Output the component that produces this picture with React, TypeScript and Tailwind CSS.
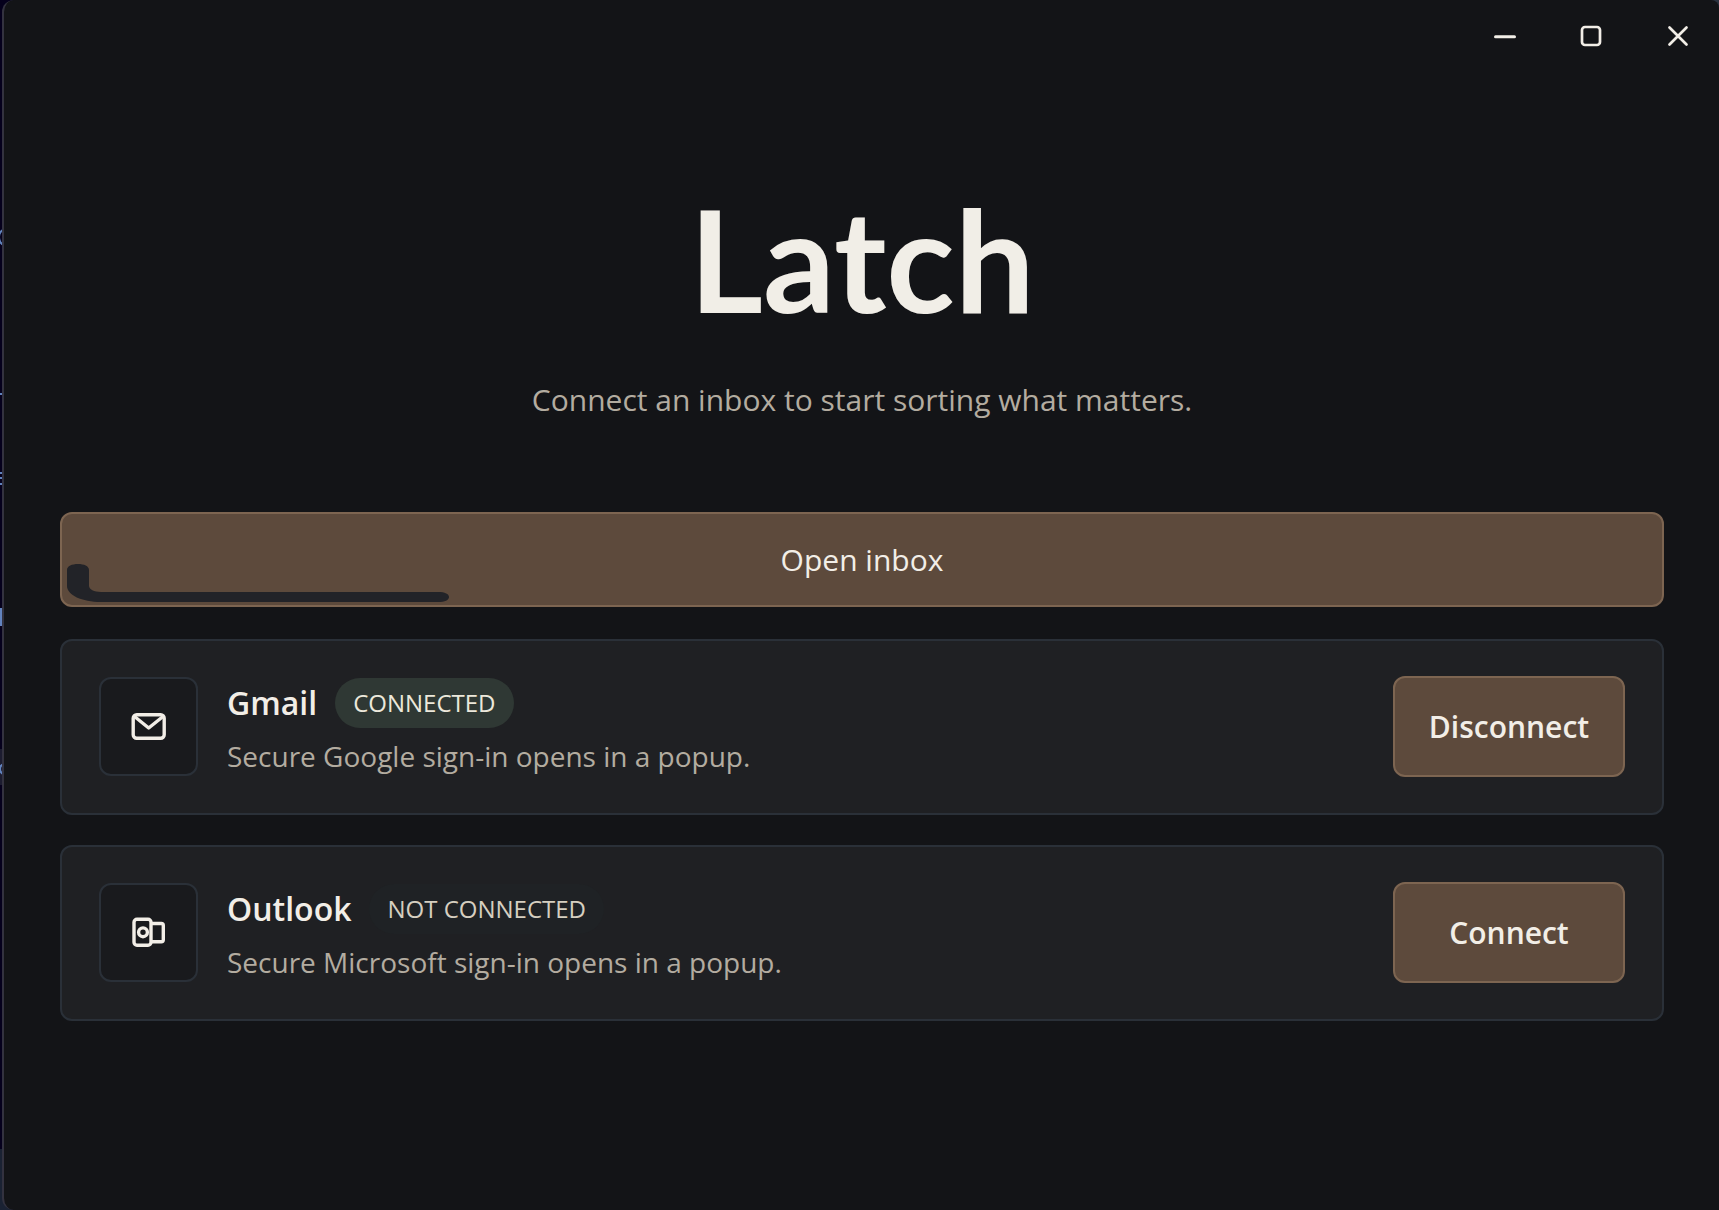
import React from "react";

interface Account {
  id: string;
  name: string;
  connected: boolean;
  note: string;
  icon: React.ReactNode;
}

function MailIcon() {
  return (
    <svg viewBox="0 0 39 39" className="size-[39px]" fill="none" stroke="currentColor" strokeWidth="3.4" strokeLinejoin="round" aria-hidden="true">
      <rect x="4.2" y="7.700" width="31" height="23.600" rx="3.500" />
      <path d="M5.500 9.500l14.200 11.500L34 9.500" />
    </svg>
  );
}

function OutlookIcon() {
  return (
    <svg viewBox="0 0 39 39" className="size-[39px]" fill="none" stroke="currentColor" strokeWidth="3.4" strokeLinejoin="round" aria-hidden="true">
      <rect x="5" y="6.300" width="17" height="26" rx="3" />
      <circle cx="14" cy="19.300" r="4.400" />
      <path d="M22 10.500h10.300a2 2 0 0 1 2 2v14.200a2 2 0 0 1-2 2H22" />
    </svg>
  );
}

const ACCOUNTS: Account[] = [
  { id: "gmail",   name: "Gmail",   connected: true,  note: "Secure Google sign-in opens in a popup.",    icon: <MailIcon /> },
  { id: "outlook", name: "Outlook", connected: false, note: "Secure Microsoft sign-in opens in a popup.", icon: <OutlookIcon /> },
];

// Sliver of the editor that stays visible to the left of the window
function DesktopEdge() {
  return (
    <svg width="14" height="1210" viewBox="0 0 14 1210" className="absolute left-0 top-0" fill="none" stroke="#6283be" strokeWidth="2" aria-hidden="true">
      <rect width="14" height="1210" fill="#05001c" stroke="none" />
      <rect y="749" width="4" height="36" fill="#1c1c30" stroke="none" />
      <rect y="1149" width="14" height="61" fill="#1a2233" stroke="none" />
      <path d="M4 229Q-1 232 -1 237Q-1 243 4 245" />
      <path d="M0 394h4" />
      <path d="M0 473h3v5M0 478h4M0 484h4" />
      <path d="M1 608v18M2 609h2M2 618h2" />
      <path d="M4 764Q0 765 0 769Q0 773 4 774" />
    </svg>
  );
}

function TitleBar() {
  const button = "flex h-[72px] w-[87px] items-center justify-center";
  return (
    <header className="-mr-[2px] flex justify-end">
      <button className={button} aria-label="Minimize">
        <svg viewBox="0 0 24 24" className="size-6" stroke="currentColor" strokeWidth="3" strokeLinecap="round" aria-hidden="true">
          <path d="M3.500 12.800h19" />
        </svg>
      </button>
      <button className={button} aria-label="Maximize">
        <svg viewBox="0 0 24 24" className="size-6" fill="none" stroke="currentColor" strokeWidth="2.700" aria-hidden="true">
          <rect x="3" y="3" width="18" height="18" rx="3" />
        </svg>
      </button>
      <button className={button} aria-label="Close">
        <svg viewBox="0 0 24 24" className="size-6" stroke="currentColor" strokeWidth="2.700" strokeLinecap="round" aria-hidden="true">
          <path d="M3.500 3.500l17 17M20.500 3.500l-17 17" />
        </svg>
      </button>
    </header>
  );
}

function AccountCard({ account }: { account: Account }) {
  return (
    <li className="flex items-center gap-[29px] rounded-xl border-2 border-[#2a3038] bg-[#1f2023] px-[37px] pb-9 pt-[35px]">
      <div className="flex size-[99px] flex-shrink-0 items-center justify-center rounded-xl border-2 border-[#2a3038] bg-[#191a1d]">
        {account.icon}
      </div>

      <div className="min-w-0 flex-1">
        <div className="flex items-center gap-[18px]">
          <h2 className="text-[32px] font-semibold leading-[50px]">{account.name}</h2>
          <span
            className={
              account.connected
                ? "rounded-full bg-[#2f3834] px-[18px] text-2xl leading-[50px] text-[#ece8db]"
                : "rounded-full bg-[#1f2225] px-[18px] text-2xl leading-[50px] text-[#d6cfc0]"
            }
          >
            {account.connected ? "CONNECTED" : "NOT CONNECTED"}
          </span>
        </div>
        <p className="mt-2 text-[28px] leading-10 text-[#b3aca0]">{account.note}</p>
      </div>

      <button className="h-[101px] w-[232px] flex-shrink-0 rounded-xl border-2 border-[#7d6551] bg-[#5d4a3c] text-[30px] font-semibold">
        {account.connected ? "Disconnect" : "Connect"}
      </button>
    </li>
  );
}

export default function App() {
  return (
    <div className="relative min-h-screen overflow-x-hidden bg-[#2a3340] pl-[2px] font-['Open_Sans','Noto_Sans',sans-serif] text-[#f2eee7]">
      <DesktopEdge />

      <div className="relative min-h-screen rounded-l-xl rounded-tr-lg border-l-2 border-[#33323f] bg-[#131417]">
        <TitleBar />

        <main className="pl-14 pr-[55px]">
          <h1 className="mt-[90px] text-center font-['Lato',sans-serif] text-[142px] font-bold leading-[192px] text-[#f1eee7]">Latch</h1>
          <p className="mt-[26px] text-center text-[30px] leading-10 text-[#b3aca0]">
            Connect an inbox to start sorting what matters.
          </p>

          <button className="relative mt-[92px] block h-[95px] w-full rounded-xl border-2 border-[#7d6551] bg-[#5d4a3c] text-[30px]">
            {/* Bent dark stroke in the lower left corner */}
            <svg width="382" height="38" viewBox="0 0 382 38" className="absolute bottom-[3px] left-[5px]" fill="#222328" aria-hidden="true">
              <path d="M0 6C0 2 5 0 11 0S22 2 22 6V22C22 25 27 28 34 28H371C378 28 382 30 382 33S378 38 371 38H34C15 38 0 31 0 22Z" />
            </svg>
            Open inbox
          </button>

          <ul className="mt-8 flex flex-col gap-[30px]">
            {ACCOUNTS.map((account) => (
              <AccountCard key={account.id} account={account} />
            ))}
          </ul>
        </main>
      </div>
    </div>
  );
}
